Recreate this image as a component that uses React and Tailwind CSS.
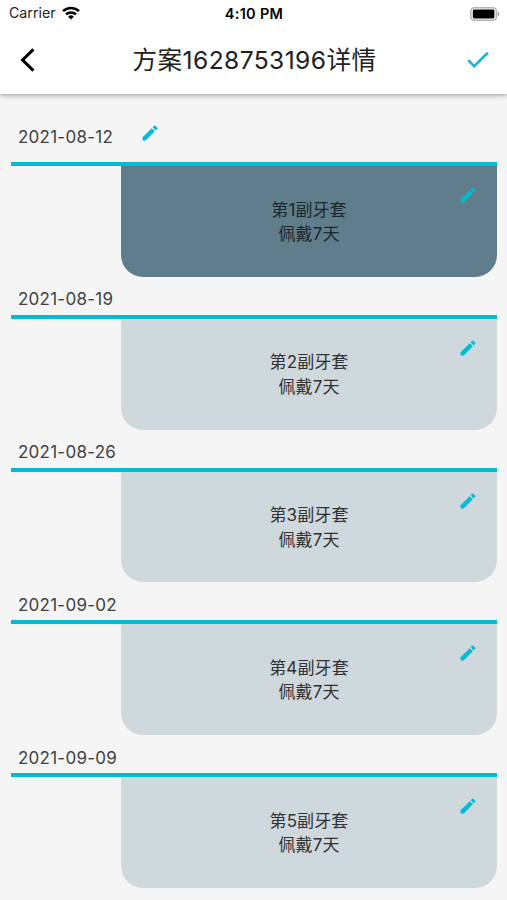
import React from "react";

const schedule = [
  { date: "2021-08-12", index: 1, days: 7 },
  { date: "2021-08-19", index: 2, days: 7 },
  { date: "2021-08-26", index: 3, days: 7 },
  { date: "2021-09-02", index: 4, days: 7 },
  { date: "2021-09-09", index: 5, days: 7 },
];

const PencilIcon = () => (
  <svg viewBox="0 0 24 24" className="w-5 h-5 shrink-0" fill="#00bcd4">
    <path d="M3 17.46v3.04c0 .28.22.5.5.5h3.04c.13 0 .26-.05.35-.15L17.81 9.94l-3.75-3.75L3.15 17.1c-.1.1-.15.22-.15.36zM20.71 7.04a.996.996 0 0 0 0-1.41l-2.34-2.34a.996.996 0 0 0-1.41 0l-1.83 1.83 3.75 3.75 1.83-1.83z" />
  </svg>
);

const StatusBar = () => (
  <div className="grid grid-cols-3 items-center h-[27px] pl-[9px] pr-[7px] text-black">
    <div className="flex items-center gap-[6px]">
      <span className="text-[14.2px] leading-none text-[#222]">Carrier</span>
      <svg viewBox="0 0 18 14" className="w-[18px] h-[14px]" fill="none" stroke="#000" strokeWidth="2.5">
        <path d="M1 5.2a11.5 11.5 0 0 1 16 0" />
        <path d="M4 8.4a7.2 7.2 0 0 1 10 0" />
        <path d="M9 13.6 6.1 10.7a4.1 4.1 0 0 1 5.8 0z" fill="#000" stroke="none" />
      </svg>
    </div>
    <div className="pt-px pr-px text-center text-[14.5px] leading-none font-semibold tracking-[0.3px]">4:10 PM</div>
    <div className="flex justify-end">
      <svg viewBox="0 0 30 14" className="w-[30px] h-[14px]">
        <rect x="0.8" y="0.8" width="25.6" height="12.4" rx="3.6" fill="none" stroke="#b4b4b4" strokeWidth="1.5" />
        <rect x="2.8" y="2.6" width="21.6" height="8.8" rx="1.4" fill="#000" />
        <path d="M27.6 4.8v4.6c1-.4 1.8-1.2 1.8-2.3s-.8-1.9-1.8-2.3z" fill="#a8a8a8" />
      </svg>
    </div>
  </div>
);

const Header = () => (
  <header className="h-[94px] bg-white shadow-[0_1px_5px_rgba(0,0,0,0.4)]">
    <StatusBar />
    <div className="grid grid-cols-[1fr_auto_1fr] items-center h-[66px] pl-[20px] pr-[18px]">
      <svg viewBox="0 0 15 24" className="w-[15px] h-[24px]" fill="none" stroke="#000" strokeWidth="3">
        <path d="M13.4 1.4 2.6 12l10.8 10.6" />
      </svg>
      <h1 className="text-[24.6px] leading-none text-[#212121] tracking-[0.4px] whitespace-nowrap">
        方案1628753196详情
      </h1>
      <svg viewBox="0 0 22 18" className="w-[22px] h-[18px] justify-self-end" fill="none" stroke="#12b6d0" strokeWidth="2.4">
        <path d="M1.2 9.2 7.2 15.2 20.8 1.6" />
      </svg>
    </div>
  </header>
);

const ScheduleItem = ({ item, active }) => (
  <div>
    {/* Date row */}
    <div className={active ? "flex items-end h-[68px] pl-[7px]" : "flex items-end h-[38px] pl-[7px]"}>
      <span
        className={
          active
            ? "w-[122px] pb-[13.5px] text-[17px] leading-6 tracking-[0.25px] text-[#414141]"
            : "w-[122px] pb-[3.5px] text-[17px] leading-6 tracking-[0.25px] text-[#414141]"
        }
      >
        {item.date}
      </span>
      {active && (
        <div className="pb-[19px]">
          <PencilIcon />
        </div>
      )}
    </div>
    {/* Card */}
    <div className="border-t-4 border-[#00bcd4] pl-[110px]">
      <div
        className={
          active
            ? "grid grid-cols-[1fr_auto_1fr] h-[110.75px] rounded-b-[22px] bg-[#607d8b] text-[#1b272c]"
            : "grid grid-cols-[1fr_auto_1fr] h-[110.75px] rounded-b-[22px] bg-[#cfd8dc] text-[#303233]"
        }
      >
        <div className="col-start-2 pt-[31.5px] text-center text-[17px] leading-[24.5px] tracking-[0.1px]">
          <p>第{item.index}副牙套</p>
          <p>佩戴{item.days}天</p>
        </div>
        <div className="flex justify-end pt-[19px] pr-[19px]">
          <PencilIcon />
        </div>
      </div>
    </div>
  </div>
);

const App = () => (
  <div className="h-[900px] overflow-hidden bg-[#f5f5f5] font-['Inter','Noto_Sans_CJK_SC',sans-serif]">
    <Header />
    <main className="pl-[11px] pr-[10px]">
      {schedule.map((item, i) => (
        <ScheduleItem key={item.date} item={item} active={i === 0} />
      ))}
    </main>
  </div>
);

export default App;
